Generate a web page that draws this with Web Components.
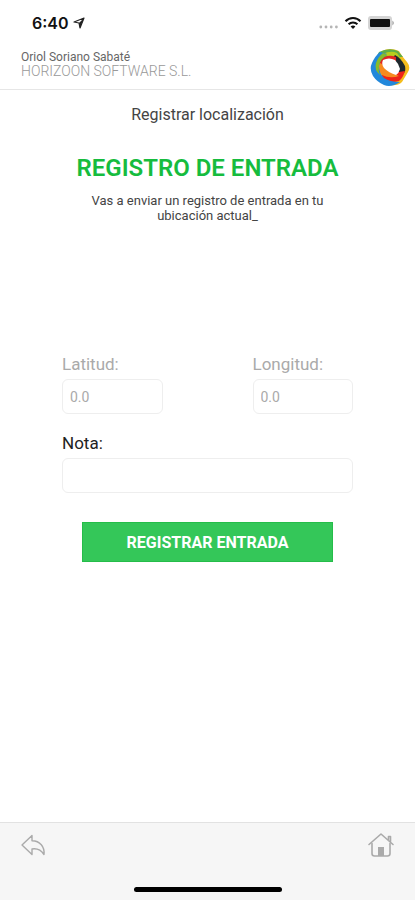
<!DOCTYPE html>
<html lang="es">
<head>
<meta charset="utf-8">
<meta name="viewport" content="width=device-width, initial-scale=1">
<title>Registrar localización</title>
<style>
    body {
        margin: 0;
        background: #fff;
        color: #444;
        font-family: Roboto, "Liberation Sans", sans-serif;
    }
</style>
</head>
<body>
<register-app>
    <status-bar slot="top" time="6:40"></status-bar>
    <user-header slot="top" name="Oriol Soriano Sabaté" company="HORIZOON SOFTWARE S.L."></user-header>
    <entry-form heading="REGISTRO DE ENTRADA" action="REGISTRAR ENTRADA">
        <span slot="title">Registrar localización</span>
        Vas a enviar un registro de entrada en tu ubicación actual_
        <text-field slot="coords" label="Latitud:" value="0.0" muted></text-field>
        <text-field slot="coords" label="Longitud:" value="0.0" muted></text-field>
        <text-field slot="note" label="Nota:"></text-field>
    </entry-form>
    <nav-bar slot="bottom"></nav-bar>
</register-app>

<script>
function attach(host, html) {
    const template = document.createElement('template');
    template.innerHTML = html;
    host.attachShadow({ mode: 'open' }).appendChild(template.content.cloneNode(true));
}

class RegisterApp extends HTMLElement {
    constructor() {
        super();
        attach(this, `
            <style>
                :host {
                    display: flex;
                    flex-direction: column;
                    min-height: 100vh;
                }
                main {
                    flex: 1;
                }
            </style>
            <slot name="top"></slot>
            <main><slot></slot></main>
            <slot name="bottom"></slot>
        `);
    }
}

class StatusBar extends HTMLElement {
    constructor() {
        super();
        attach(this, `
            <style>
                :host {
                    display: flex;
                    align-items: center;
                    justify-content: space-between;
                    height: 46px;
                    padding: 0 20px 0 32px;
                    color: #111;
                    font: 600 16px/20px Inter, "Liberation Sans", sans-serif;
                }
                div {
                    display: flex;
                    align-items: center;
                    gap: 4px;
                }
                .right {
                    gap: 6px;
                }
                svg {
                    display: block;
                }
            </style>
            <div>
                <span class="time"></span>
                <svg width="12" height="12" viewBox="0 0 12 12">
                    <path d="M11 1 7 11 6 6 1 5Z" fill="none" stroke="#222" stroke-width="1.2" stroke-linejoin="round"/>
                    <path d="M11 1 7 11 6 6Z" fill="#222"/>
                </svg>
            </div>
            <div class="right">
                <svg width="19" height="14" viewBox="0 0 19 14" fill="#b5b5b5">
                    <circle cx="1.8" cy="11" r="1.4"/><circle cx="7" cy="11" r="1.4"/>
                    <circle cx="12.2" cy="11" r="1.4"/><circle cx="17.4" cy="11" r="1.4"/>
                </svg>
                <svg width="18" height="14" viewBox="0 0 18 14" fill="none" stroke="#111" stroke-width="2">
                    <path d="M1.5 5.2C5.6 .9 12.4 .9 16.5 5.2"/>
                    <path d="M4.6 8.2C7 5.8 11 5.8 13.4 8.2"/>
                    <path d="M9 13 6.6 10.4C8 9.2 10 9.2 11.4 10.4Z" fill="#111" stroke="none"/>
                </svg>
                <svg width="27" height="14" viewBox="0 0 27 14">
                    <rect width="24" height="14" rx="3" fill="#d4d4d4"/>
                    <rect x="2" y="3" width="20" height="8" rx="1" fill="#111"/>
                    <path d="M24.5 4.5q2.4 2.5 0 5Z" fill="#888"/>
                </svg>
            </div>
        `);
    }

    connectedCallback() {
        this.shadowRoot.querySelector('.time').textContent = this.getAttribute('time');
    }
}

class UserHeader extends HTMLElement {
    constructor() {
        super();
        attach(this, `
            <style>
                :host {
                    display: flex;
                    align-items: center;
                    justify-content: space-between;
                    height: 43px;
                    padding: 0 5px 0 21px;
                    border-bottom: 1px solid #e6e6e6;
                }
                .info {
                    margin-bottom: 7px;
                }
                .name {
                    color: #666;
                    font-size: 12px;
                    line-height: 14px;
                }
                .company {
                    color: #999;
                    font-size: 14px;
                    font-weight: 300;
                    line-height: 14px;
                }
                svg {
                    display: block;
                }
            </style>
            <div class="info">
                <div class="name"></div>
                <div class="company"></div>
            </div>
            <svg width="40" height="40" viewBox="0 0 40 40">
                <!-- yellow and green outer bands -->
                <path d="M12 3Q20-1 29 3Q31 7 37 14Q41 19 38 24L32 34Q28 38 20 37L8 30L6 11Z" fill="#f5bd1c"/>
                <path d="M9 4Q19-1 28 3L33 9L26 9Q16 6 8 20L4 14Z" fill="#5fae48"/>
                <path d="M13 6Q21 2 27 5L32 12L20 9Z" fill="#b9cd1d"/>
                <!-- dark, red and orange inner bands -->
                <path d="M25 7Q31 10 35 18Q36 23 34 25L28 27L22 11Z" fill="#1f282c"/>
                <path d="M9 13Q17 5 26 9L26 13L10 19Z" fill="#e02822"/>
                <path d="M35 23Q33 30 29 33Q20 36 11 31L13 24L29 24Z" fill="#ee2518"/>
                <path d="M8 14 12 16 18 23 29 28Q20 31 12 27Q7 21 8 14Z" fill="#f68a1f"/>
                <!-- blue band down the left side -->
                <path d="M10 4Q5 8 2 15Q-1 21 3 28Q7 34 14 37Q21 40 30 34Q20 34 14 30Q9 25 9 18Q10 10 17 6Z" fill="#2288db"/>
                <path d="M13 5Q8 9 6 15Q4 22 10 27Q8 23 9 18Q10 11 17 7Z" fill="#86bb2b"/>
                <!-- open centre -->
                <path d="M13 12Q19 9 25 12Q29 16 30 21Q29 25 26 27Q19 25 14 20Q11 16 13 12Z" fill="#fff"/>
            </svg>
        `);
    }

    connectedCallback() {
        this.shadowRoot.querySelector('.name').textContent = this.getAttribute('name');
        this.shadowRoot.querySelector('.company').textContent = this.getAttribute('company');
    }
}

class TextField extends HTMLElement {
    constructor() {
        super();
        attach(this, `
            <style>
                :host {
                    display: block;
                    color: #222;
                }
                :host([muted]) {
                    color: #aaa;
                }
                label {
                    display: block;
                    margin-bottom: 4px;
                    font-size: 17px;
                    line-height: 22px;
                }
                input {
                    display: block;
                    box-sizing: border-box;
                    width: 100%;
                    height: 35px;
                    padding: 0 7px;
                    border: 1px solid #eee;
                    border-radius: 6px;
                    background: #fff;
                    color: #aaa;
                    font: inherit;
                    font-size: 14px;
                }
            </style>
            <label for="field"></label>
            <input id="field" type="text">
        `);
    }

    connectedCallback() {
        this.shadowRoot.querySelector('label').textContent = this.getAttribute('label');
        this.shadowRoot.querySelector('input').value = this.getAttribute('value') || '';
    }
}

class EntryForm extends HTMLElement {
    constructor() {
        super();
        attach(this, `
            <style>
                :host {
                    display: block;
                    padding: 15px 62px 24px;
                }
                header {
                    text-align: center;
                }
                h1 {
                    margin: 0;
                    font-size: 16px;
                    font-weight: 400;
                    line-height: 20px;
                }
                h2 {
                    margin: 27px 0 9px;
                    color: #16bc3e;
                    font-size: 24px;
                    font-weight: 600;
                    line-height: 32px;
                    white-space: nowrap;
                }
                p {
                    margin: 0 24px;
                    font-size: 13px;
                    line-height: 15px;
                }
                form {
                    display: grid;
                    gap: 18px;
                    margin-top: 130px;
                }
                .coords {
                    display: grid;
                    grid-template-columns: 1fr 1fr;
                    gap: 90px;
                }
                button {
                    height: 40px;
                    margin: 11px 20px 0;
                    border: 1px solid #25bd49;
                    background: #34c759;
                    color: #fff;
                    font: inherit;
                    font-size: 16px;
                    font-weight: 700;
                }
            </style>
            <header>
                <h1><slot name="title"></slot></h1>
                <h2></h2>
                <p><slot></slot></p>
            </header>
            <form>
                <div class="coords"><slot name="coords"></slot></div>
                <slot name="note"></slot>
                <button type="button"></button>
            </form>
        `);
    }

    connectedCallback() {
        this.shadowRoot.querySelector('h2').textContent = this.getAttribute('heading');
        this.shadowRoot.querySelector('button').textContent = this.getAttribute('action');
    }
}

class NavBar extends HTMLElement {
    constructor() {
        super();
        attach(this, `
            <style>
                :host {
                    display: block;
                    padding: 8px 20px;
                    border-top: 1px solid #e2e2e2;
                    background: #f6f6f6;
                }
                nav {
                    display: flex;
                    justify-content: space-between;
                    height: 56px;
                }
                a {
                    display: block;
                    height: 28px;
                }
                svg {
                    display: block;
                    fill: none;
                    stroke: #aaa;
                    stroke-linejoin: round;
                    stroke-linecap: round;
                }
                .indicator {
                    width: 148px;
                    height: 5px;
                    margin: 0 auto;
                    border-radius: 3px;
                    background: #000;
                }
            </style>
            <nav>
                <a href="#back" aria-label="Volver">
                    <svg width="28" height="28" viewBox="0 0 28 28" stroke-width="1.4">
                        <path d="M12 4.5 2 14 12 23.5V18C17 17.2 21 18.8 24 23.5C24.8 15.5 20 10 12 9.8Z"/>
                    </svg>
                </a>
                <a href="#home" aria-label="Inicio">
                    <svg width="28" height="28" viewBox="0 0 28 28" stroke-width="1.6">
                        <path d="M2 13.5 14 3 26 13.5M21.5 8.5V5.5H23.5V10.5"/>
                        <path d="M5 12.5V22.5Q5 25 7.5 25H20.5Q23 25 23 22.5V12.5"/>
                        <path d="M11 16H17V25H11Z" fill="#aaa" stroke="none"/>
                    </svg>
                </a>
            </nav>
            <div class="indicator"></div>
        `);
    }
}

customElements.define('register-app', RegisterApp);
customElements.define('status-bar', StatusBar);
customElements.define('user-header', UserHeader);
customElements.define('text-field', TextField);
customElements.define('entry-form', EntryForm);
customElements.define('nav-bar', NavBar);
</script>
</body>
</html>
